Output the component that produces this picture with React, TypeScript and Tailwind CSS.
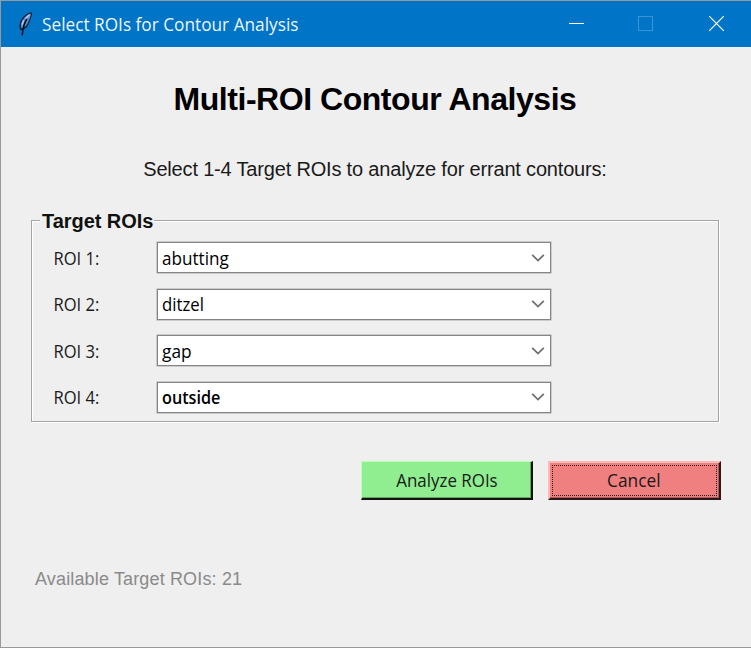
import React from "react";

const rois = [
  { label: "ROI 1:", value: "abutting", text: "scale-x-[0.95]" },
  { label: "ROI 2:", value: "ditzel", text: "scale-x-[0.93]" },
  { label: "ROI 3:", value: "gap", text: "scale-x-[0.96]" },
  { label: "ROI 4:", value: "outside", text: "scale-x-[0.9] font-semibold" },
];

function Feather() {
  return (
    <svg width="16" height="26" viewBox="0 0 16 26" className="shrink-0">
      <path d="M14.6 1.2 C10 1.6 5 6 3.2 11 C2.2 14 2.2 17 3.6 19.6 C8 18.5 11 15.5 12.3 11.5 C13 9 15.6 4.5 14.6 1.2Z" fill="#15202f" />
      <path d="M13.6 2.4 C9.5 3.6 5.6 8 4.2 12.5 C3.7 14.5 3.8 16 4.6 17.4 C7.8 16.5 10.2 14 11.2 11 C11.8 8.5 14.2 5.5 13.6 2.4Z" fill="#5f92d4" />
      <path d="M10 8 C7.5 11.5 6 15 5.2 24.5" fill="none" stroke="#06101c" strokeWidth="1.5" />
      <path d="M12.6 3.8 L8.4 7.4 M6.6 9.3 L5 13.5" stroke="#b7d4f3" strokeWidth="1.2" />
    </svg>
  );
}

function TitleBar() {
  return (
    <header className="flex h-[46px] shrink-0 items-center bg-[#0075c8] text-white">
      <div className="ml-[16px] flex w-[25px] items-center">
        <Feather />
      </div>
      <h1 className="origin-left scale-x-[0.907] whitespace-nowrap text-[19px] font-normal leading-[24px] text-white/95">
        Select ROIs for Contour Analysis
      </h1>
      <div className="ml-auto flex items-center">
        <svg width="70" height="46" viewBox="0 0 70 46">
          <path d="M28 22.5H43" stroke="#fff" />
        </svg>
        <svg width="70" height="46" viewBox="0 0 70 46">
          <rect x="27.5" y="15.5" width="14" height="14" fill="none" stroke="#3b94d6" />
        </svg>
        <svg width="70" height="46" viewBox="0 0 70 46">
          <path d="M28.2 15.2L42.8 29.8M42.8 15.2L28.2 29.8" stroke="#fff" strokeWidth="1.2" />
        </svg>
      </div>
    </header>
  );
}

function Combo({ value, text }: { value: string; text: string }) {
  return (
    <div className="flex h-[31px] w-[394px] items-center justify-between border border-[#858585] bg-white pl-[4px] pr-[5px] shadow-[0_0_0_0.5px_#a8a8a8]">
      <span className={"origin-left text-[18px] leading-[24px] text-black " + text}>{value}</span>
      <svg width="14" height="10" viewBox="0 0 14 10">
        <path d="M1.2 1.9L7 7.6L12.8 1.9" fill="none" stroke="#707070" strokeWidth="1.8" />
      </svg>
    </div>
  );
}

export default function App() {
  return (
    <div className="flex h-[648px] w-[751px] flex-col overflow-hidden border-b border-l border-t border-[#999999] bg-[#efefef] font-['Open_Sans','Noto_Sans',sans-serif] text-[#1a1a1a]">
      <TitleBar />
      <main className="flex flex-col pl-[30px] pr-[32px]">
        <h2 className="mt-[34px] whitespace-nowrap text-center font-['Liberation_Sans',Arial,sans-serif] text-[32px] font-bold leading-[36px] tracking-[-0.46px] text-black">
          Multi-ROI Contour Analysis
        </h2>
        <p className="mt-[40px] whitespace-nowrap text-center font-['Liberation_Sans',Arial,sans-serif] text-[20px] leading-[24px] tracking-[-0.18px]">
          Select 1-4 Target ROIs to analyze for errant contours:
        </p>
        <section className="mt-[39px] h-[202px] w-[688px] border border-[#a5a5a5] shadow-[inset_1px_1px_0_#fff,1px_1px_0_#fff]">
          <h3 className="-mt-[12px] ml-[8px] w-[114px] whitespace-nowrap bg-[#efefef] pl-[2px] font-['Liberation_Sans',Arial,sans-serif] text-[20px] font-bold leading-[24px] tracking-[-0.05px] text-[#111]">
            Target ROIs
          </h3>
          <div className="mt-[9px] flex flex-col gap-[15.6px] pl-[22px]">
            {rois.map((roi) => (
              <div key={roi.label} className="flex items-center">
                <span className="flex w-[103px] text-[18px] leading-[24px]">
                  <span className="origin-left -translate-x-[0.5px] scale-x-[0.92]">{roi.label}</span>
                </span>
                <Combo value={roi.value} text={roi.text} />
              </div>
            ))}
          </div>
        </section>
        <div className="-mr-[2px] mt-[39px] flex justify-end gap-[15px]">
          <button className="h-[39px] w-[172px] border border-b-2 border-r-2 border-b-[#111] border-l-[#b8ffb8] border-r-[#111] border-t-[#b8ffb8] bg-[#90ee90] text-[18px] leading-[24px] shadow-[inset_-1px_-1px_0_#62a562]">
            <span className="inline-block scale-x-[0.94]">Analyze ROIs</span>
          </button>
          <button className="h-[39px] w-[173px] border-2 border-b-[#2b1818] border-l-[#ffb9b9] border-r-[#2b1818] border-t-[#ffb9b9] bg-[#f08080] p-[2px] text-[18px] leading-[24px] shadow-[inset_-1px_-1px_0_#a95a5a]">
            <span className="flex h-full items-center justify-center border-[1.5px] border-dotted border-[#301818] pb-[2px] pr-[1px]">
              <span className="scale-x-[0.96]">Cancel</span>
            </span>
          </button>
        </div>
        <p className="ml-[4px] mt-[67px] font-['Liberation_Sans',Arial,sans-serif] text-[18px] leading-[24px] tracking-[0.15px] text-[#8a8a8a]">
          Available Target ROIs: 21
        </p>
      </main>
    </div>
  );
}
